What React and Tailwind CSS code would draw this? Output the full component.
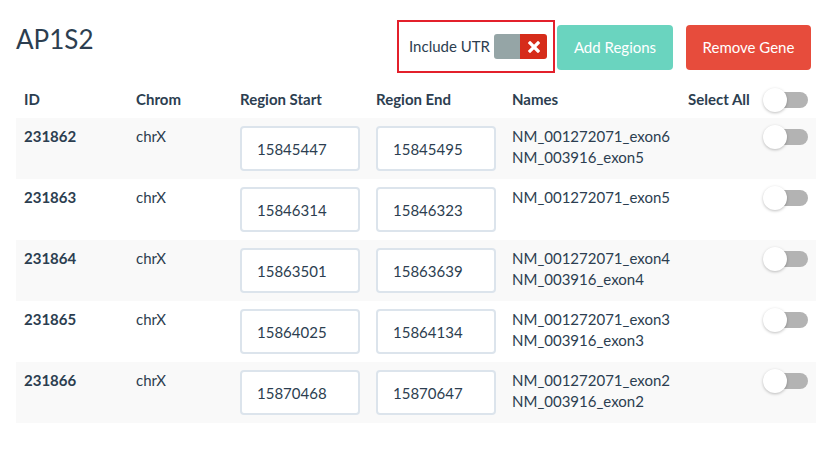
import React from 'react';

const rows = [
  { id: '231862', chrom: 'chrX', start: '15845447', end: '15845495', names: ['NM_001272071_exon6', 'NM_003916_exon5'] },
  { id: '231863', chrom: 'chrX', start: '15846314', end: '15846323', names: ['NM_001272071_exon5'] },
  { id: '231864', chrom: 'chrX', start: '15863501', end: '15863639', names: ['NM_001272071_exon4', 'NM_003916_exon4'] },
  { id: '231865', chrom: 'chrX', start: '15864025', end: '15864134', names: ['NM_001272071_exon3', 'NM_003916_exon3'] },
  { id: '231866', chrom: 'chrX', start: '15870468', end: '15870647', names: ['NM_001272071_exon2', 'NM_003916_exon2'] },
];

function Toggle() {
  return (
    <div className="relative w-[45px] h-[24px] shrink-0">
      <div className="absolute right-0 top-[4px] w-[40px] h-[16px] rounded-full bg-[#b3b3b3]" />
      <div className="absolute left-0 top-0 w-[24px] h-[24px] rounded-full bg-white shadow-[0_1px_3px_rgba(0,0,0,0.25)]" />
    </div>
  );
}

function RegionInput({ value }) {
  return (
    <input
      readOnly
      value={value}
      className="w-[120px] h-[45px] border-2 border-[#dce4ec] rounded-[4px] bg-white px-[15px] text-[15px] text-[#2c3e50] outline-none"
    />
  );
}

export default function App() {
  return (
    <div className="min-h-[453px] bg-white px-4 text-[15px] leading-[21px] text-[#2c3e50] font-['Lato',sans-serif]">
      {/* Gene header */}
      <div className="flex items-start justify-between h-[81px]">
        <h3 className="mt-[25px] text-[26px] leading-[28.6px] font-normal">AP1S2</h3>
        <div className="flex items-start mt-[20px] mr-[11px]">
          <div className="flex items-center gap-[4px] h-[53px] border-2 border-[#e3202b] pl-[10px] pr-[6px]">
            <span>Include UTR</span>
            <div className="flex w-[53px] h-[25px] rounded-[3px] overflow-hidden">
              <div className="w-[26px] bg-[#95a5a6]" />
              <div className="flex-1 bg-[#d62c1a] flex items-center justify-center">
                <svg width="12" height="12" viewBox="0 0 12 12">
                  <path d="M2 2 L10 10 M10 2 L2 10" stroke="white" strokeWidth="3.2" strokeLinecap="square" />
                </svg>
              </div>
            </div>
          </div>
          <button className="ml-[2px] mt-[5px] w-[116px] h-[45px] rounded-[4px] bg-[#6ad4bf] text-white text-[15px]">Add Regions</button>
          <button className="ml-[13px] mt-[5px] w-[125px] h-[45px] rounded-[4px] bg-[#e74c3c] text-white text-[15px]">Remove Gene</button>
        </div>
      </div>

      {/* Regions table */}
      <table className="w-[800px] table-fixed border-collapse">
        <thead>
          <tr className="text-left">
            <th className="w-[112px] p-2 font-bold">ID</th>
            <th className="w-[104px] p-2 font-bold">Chrom</th>
            <th className="w-[136px] p-2 font-bold">Region Start</th>
            <th className="w-[136px] p-2 font-bold">Region End</th>
            <th className="w-[176px] p-2 font-bold">Names</th>
            <th className="w-[136px] p-2 font-bold">
              <div className="flex items-center justify-between h-[21px]">
                <span>Select All</span>
                <Toggle />
              </div>
            </th>
          </tr>
        </thead>
        <tbody>
          {rows.map((r, i) => (
            <tr key={r.id} className={i % 2 === 0 ? 'bg-[#f9f9f9]' : 'bg-white'}>
              <td className="p-2 align-top font-bold">{r.id}</td>
              <td className="p-2 align-top">{r.chrom}</td>
              <td className="p-2 align-top"><RegionInput value={r.start} /></td>
              <td className="p-2 align-top"><RegionInput value={r.end} /></td>
              <td className="p-2 align-top">
                {r.names.map((n) => (
                  <div key={n}>{n}</div>
                ))}
              </td>
              <td className="p-2 align-top">
                <div className="flex items-center justify-end h-[21px]">
                  <Toggle />
                </div>
              </td>
            </tr>
          ))}
        </tbody>
      </table>
    </div>
  );
}
